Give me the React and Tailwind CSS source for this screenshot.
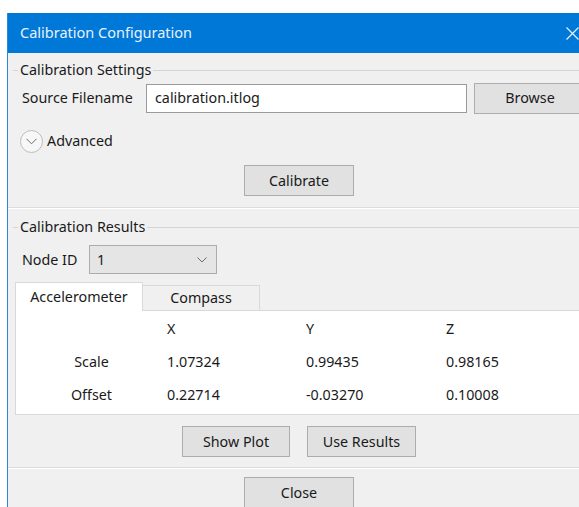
import React from "react";

const font = { fontFamily: '"Noto Sans", "Open Sans", sans-serif' };

function Btn({ children, className = "" }) {
  return (
    <div
      className={`flex items-center justify-center h-[31px] bg-[#e1e1e1] border border-[#adadad] text-[14.3px] text-[#1a1a1a] ${className}`}
    >
      {children}
    </div>
  );
}

function GroupHeader({ children }) {
  return (
    <div className="flex items-center h-[18px] ml-[5px]">
      <div className="w-[5px] h-px bg-[#d5d5d5]" />
      <span className="px-[2px] text-[14.3px] text-[#1a1a1a] leading-none">{children}</span>
      <div className="flex-1 h-px bg-[#d5d5d5]" />
    </div>
  );
}

function Separator() {
  return (
    <div className="flex flex-col">
      <div className="h-px bg-[#dcdcdc]" />
      <div className="h-px bg-white" />
    </div>
  );
}

const rows = [
  ["Scale", "1.07324", "0.99435", "0.98165"],
  ["Offset", "0.22714", "-0.03270", "0.10008"],
];

export default function App() {
  return (
    <div className="w-[579px] h-[507px] bg-white overflow-hidden pt-[13px] pl-[7px]" style={font}>
      <div className="w-[600px] h-[520px] border-l border-[#2b88d8] bg-[#f0f0f0] flex flex-col">
        {/* title bar */}
        <div className="h-[40px] bg-[#0078d7] flex items-center pl-[12px] text-[14.5px] text-[#e8f1fb] relative">
          <span>Calibration Configuration</span>
          <svg
            className="absolute left-[558px] top-[14px]"
            width="13"
            height="13"
            viewBox="0 0 13 13"
          >
            <path d="M0.5 0.5L12.5 12.5M12.5 0.5L0.5 12.5" stroke="#e8f1fb" strokeWidth="1.2" />
          </svg>
        </div>

        {/* calibration settings */}
        <div className="mt-[8px]">
          <GroupHeader>Calibration Settings</GroupHeader>
        </div>
        <div className="flex items-center mt-[4px] h-[30px]">
          <span className="w-[138px] pl-[14px] text-[14.3px] text-[#1a1a1a]">Source Filename</span>
          <div className="w-[321px] h-[29px] bg-white border border-[#9a9a9a] flex items-center pl-[8px] text-[14.3px] text-[#1a1a1a]">
            calibration.itlog
          </div>
          <Btn className="ml-[7px] w-[112px] h-[30px]">Browse</Btn>
        </div>
        <div className="flex items-center mt-[17px] h-[22px] ml-[12px]">
          <div className="w-[23px] h-[23px] rounded-full border border-[#bcbcbc] bg-[#f7f7f7] flex items-center justify-center">
            <svg width="11" height="7" viewBox="0 0 11 7" className="mt-px">
              <path d="M0.5 0.8L5.5 5.8L10.5 0.8" fill="none" stroke="#6d6d6d" strokeWidth="1" />
            </svg>
          </div>
          <span className="ml-[4px] text-[14.3px] text-[#1a1a1a]">Advanced</span>
        </div>
        <div className="flex mt-[13px]">
          <Btn className="ml-[236px] w-[110px]">Calibrate</Btn>
        </div>
        <div className="mt-[11px]">
          <Separator />
        </div>

        {/* calibration results */}
        <div className="mt-[9px]">
          <GroupHeader>Calibration Results</GroupHeader>
        </div>
        <div className="flex items-center mt-[9px] h-[29px]">
          <span className="w-[81px] pl-[14px] text-[14.3px] text-[#1a1a1a]">Node ID</span>
          <div className="w-[128px] h-[29px] bg-[#e5e5e5] border border-[#acacac] flex items-center justify-between pl-[7px] pr-[9px] text-[14.3px] text-[#1a1a1a]">
            <span>1</span>
            <svg width="10" height="6" viewBox="0 0 10 6">
              <path d="M0.5 0.5L5 5L9.5 0.5" fill="none" stroke="#6d6d6d" strokeWidth="1" />
            </svg>
          </div>
        </div>

        <div className="flex items-end mt-[8px] ml-[7px] h-[28px]">
          <div className="w-[128px] h-[29px] bg-white border border-b-0 border-[#d9d9d9] flex items-center justify-center text-[14.3px] text-[#1a1a1a] relative z-10 -mb-px">
            Accelerometer
          </div>
          <div className="w-[117px] h-[25px] bg-[#f0f0f0] border border-l-0 border-b-0 border-[#d9d9d9] flex items-center justify-center text-[14.3px] text-[#1a1a1a]">
            Compass
          </div>
        </div>
        <div className="ml-[7px] h-[105px] bg-white border border-[#d9d9d9] pt-px text-[14.3px] text-[#1a1a1a]">
          <div className="flex h-[33px] items-center">
            <span className="w-[151px]" />
            <span className="w-[139px]">X</span>
            <span className="w-[140px]">Y</span>
            <span>Z</span>
          </div>
          {rows.map((r) => (
            <div key={r[0]} className="flex h-[33px] items-center">
              <span className="w-[151px] text-center">{r[0]}</span>
              <span className="w-[139px]">{r[1]}</span>
              <span className="w-[140px]">{r[2]}</span>
              <span>{r[3]}</span>
            </div>
          ))}
        </div>

        <div className="flex mt-[11px] ml-[174px] gap-[17px]">
          <Btn className="w-[108px]">Show Plot</Btn>
          <Btn className="w-[109px]">Use Results</Btn>
        </div>
        <div className="mt-[10px]">
          <Separator />
        </div>
        <div className="flex mt-[8px]">
          <Btn className="ml-[236px] w-[110px]">Close</Btn>
        </div>
      </div>
    </div>
  );
}
